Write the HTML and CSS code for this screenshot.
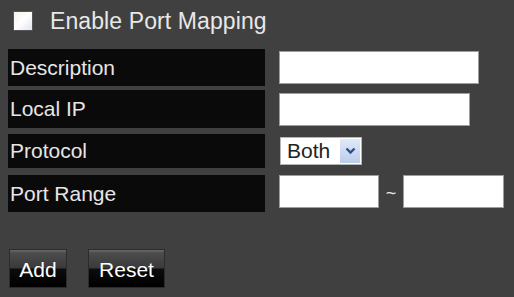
FILE: index.html
```html
<!DOCTYPE html>
<html>
<head>
<meta charset="utf-8">
<link rel="stylesheet" href="styles.css">
</head>
<body>
<div class="page">
  <div class="header">
    <span class="check"></span>
    <span class="title">Enable Port Mapping</span>
  </div>
  <div class="form">
    <div class="row r1">
      <div class="label">Description</div>
      <div class="field"><span class="input w200"></span></div>
    </div>
    <div class="row r2">
      <div class="label">Local IP</div>
      <div class="field"><span class="input w191"></span></div>
    </div>
    <div class="row r3">
      <div class="label">Protocol</div>
      <div class="field">
        <span class="select"><span class="sel-text">Both</span><span class="sel-arrow"><svg width="11" height="8" viewBox="0 0 11 8"><path d="M1.5 1.5 L5.5 5.5 L9.5 1.5" fill="none" stroke="#2f4f8c" stroke-width="2.4"/></svg></span></span>
      </div>
    </div>
    <div class="row r4">
      <div class="label">Port Range</div>
      <div class="field">
        <span class="input w100"></span>
        <span class="tilde">~</span>
        <span class="input w101"></span>
      </div>
    </div>
  </div>
  <div class="buttons">
    <span class="btn add">Add</span>
    <span class="btn reset">Reset</span>
  </div>
</div>
</body>
</html>
```
FILE: styles.css
```css
html, body {
  margin: 0;
  padding: 0;
  background: #404040;
}
body {
  width: 514px;
  height: 297px;
  overflow: hidden;
  font-family: "Liberation Sans", Arial, sans-serif;
}
.page {
  padding: 0 0 0 8px;
}
.header {
  display: flex;
  align-items: center;
  height: 42px;
  padding-left: 6px;
}
.check {
  width: 18px;
  height: 18px;
  margin-top: -1px;
  background: linear-gradient(135deg, #f7f3ea 0%, #ffffff 50%, #dfe4ee 100%);
  box-shadow: 0 0 0 1px #555;
}
.title {
  margin-left: 18px;
  font-size: 23px;
  color: #e8e8e8;
  letter-spacing: 0.1px;
}
.form {
  display: flex;
  flex-direction: column;
  margin-top: 7px;
}
.row {
  display: flex;
  align-items: center;
}
.r1 { height: 37px; }
.r2 { height: 38px; margin-top: 4px; }
.r3 { height: 34px; margin-top: 6px; }
.r4 { height: 37px; margin-top: 7px; }
.label {
  width: 255px;
  height: 100%;
  background: #0a0a0a;
  color: #e6e6e6;
  font-size: 21px;
  display: flex;
  align-items: center;
  padding-left: 2px;
}
.field {
  display: flex;
  align-items: center;
  margin-left: 14px;
}
.input {
  display: block;
  height: 31px;
  background: #fff;
  border: 1px solid #9d9d9d;
}
.w200 { width: 198px; }
.w191 { width: 189px; }
.w100 { width: 98px; }
.w101 { width: 99px; }
.r4 .field { margin-top: -4px; }
.tilde {
  width: 24px;
  text-align: center;
  color: #e6e6e6;
  font-size: 18px;
  margin-top: 4px;
}
.select {
  display: flex;
  align-items: center;
  width: 80px;
  height: 26px;
  margin-left: 1px;
  background: #fff;
  border: 1px solid #b5b5b5;
}
.sel-text {
  flex: 1;
  padding-left: 6px;
  font-size: 21px;
  color: #222;
  line-height: 26px;
}
.sel-arrow {
  width: 20px;
  height: 24px;
  margin-right: 1px;
  display: flex;
  align-items: center;
  justify-content: center;
  background: linear-gradient(#dfe9f8, #bccdeb);
}
.buttons {
  display: flex;
  margin-top: 38px;
  padding-left: 2px;
}
.btn {
  height: 37px;
  display: flex;
  align-items: center;
  justify-content: center;
  color: #fff;
  font-size: 21px;
  background: linear-gradient(#6a6a6a 0%, #4c4c4c 8%, #3a3a3a 48%, #0c0c0c 52%, #000 100%);
  box-shadow: 0 0 0 1px #2c2c2c;
  padding-top: 2px;
  box-sizing: border-box;
}
.add { width: 56px; }
.reset { width: 75px; margin-left: 23px; }
```
